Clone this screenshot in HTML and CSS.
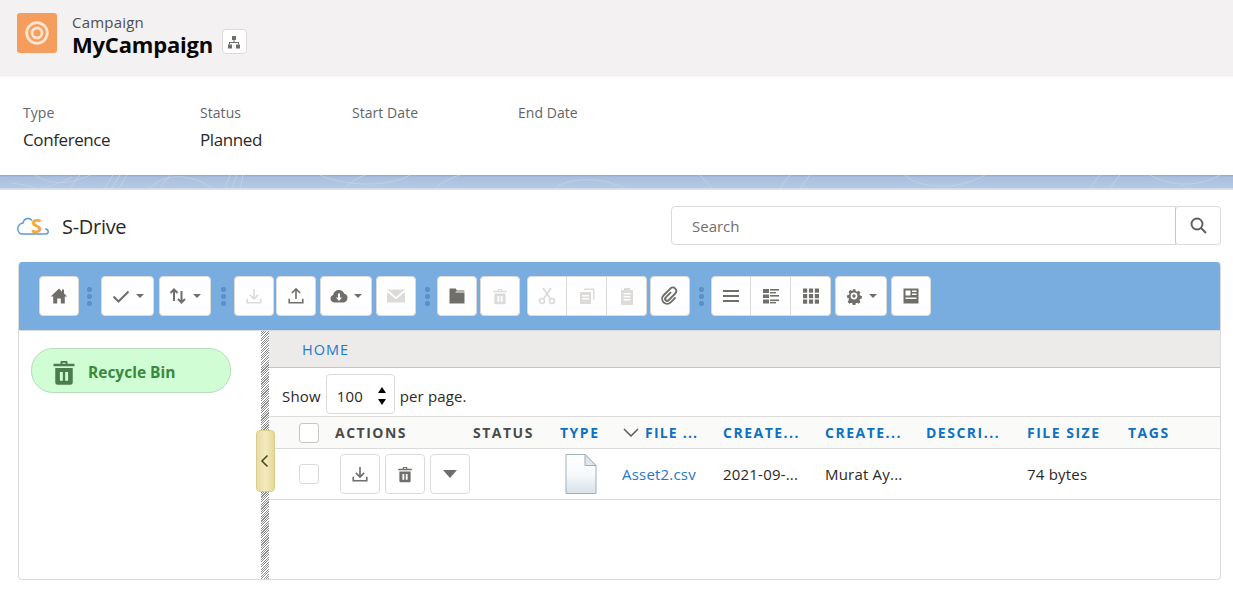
FILE: index.html
```html
<!DOCTYPE html>
<html lang="en">
<head>
<meta charset="utf-8">
<title>MyCampaign</title>
<link rel="stylesheet" href="styles.css">
</head>
<body>
<svg class="defs" width="0" height="0" aria-hidden="true">
  <symbol id="i-trash" viewBox="0 0 24 24"><path d="M9 3.500a1 1 0 0 1 1-1h4a1 1 0 0 1 1 1V5h6v2H3V5h6zM10.600 5h2.800V4h-2.800zM4.500 8.500h15V21a2 2 0 0 1-2 2h-11a2 2 0 0 1-2-2zM8.500 12v7.500h2.500V12zM13 12v7.500h2.500V12z" fill-rule="evenodd"/></symbol>
  <symbol id="i-dl" viewBox="0 0 24 24"><path d="M12 2.500v13M6.500 10.500l5.500 5.500 5.500-5.500M3 15.500v5.500h18v-5.500" fill="none" stroke="currentColor" stroke-width="2.200"/></symbol>
</svg>

<header class="page-head">
  <div class="camp-icon">
    <svg width="26" height="26" viewBox="0 0 26 26" fill="none" stroke="#fff"><circle cx="13" cy="13" r="10.300" stroke-width="2.800" opacity=".72"/><circle cx="13" cy="13" r="5" stroke-width="2.800" opacity=".72"/></svg>
  </div>
  <div class="camp-titles">
    <div class="camp-type">Campaign</div>
    <div class="camp-name-row">
      <h1 class="camp-name">MyCampaign</h1>
      <button class="hier-btn" aria-label="View hierarchy">
        <svg width="14" height="14" viewBox="0 0 14 14" fill="#706e6b"><rect x="5" y="1" width="4" height="4"/><rect x="1" y="9.500" width="4" height="4"/><rect x="9" y="9.500" width="4" height="4"/><path d="M6.500 5h1v2h4.500v2.500h-1V8H3v1.500H2V7h4.500z"/></svg>
      </button>
    </div>
  </div>
</header>

<section class="details">
  <div class="field f-type"><div class="f-label">Type</div><div class="f-value">Conference</div></div>
  <div class="field f-status"><div class="f-label">Status</div><div class="f-value">Planned</div></div>
  <div class="field f-start"><div class="f-label">Start Date</div></div>
  <div class="field f-end"><div class="f-label">End Date</div></div>
</section>

<div class="band">
  <svg width="1233" height="13" viewBox="0 0 1233 13" fill="none" stroke="#c5d5ea" stroke-width="1" opacity=".75">
    <path d="M12 8C25 10 30 11 38 14M35 0C50 10 70 10 90 0M70 13L80 0M72 2C60 8 50 12 40 13M105 13L113 0M112 13L120 0M119 13L127 0M150 13C165-2 190-2 212 13M225 13L230 0M232 13L237 0M240 13L243 0M170 0L160 13M320 0C345 12 390 12 410 0M345 13C350 8 355 4 365 0M435 13C445 6 450 3 460 0M555 13C570 2 600 2 625 13M700 0L712 13M780 13L790 0M800 13L810 0M905 0C920 15 960 15 985 0M1090 13L1100 0M1110 13L1120 0M1150 0C1170 12 1200 12 1220 0"/>
  </svg>
</div>

<section class="sdrive">
  <div class="sd-bar">
    <div class="sd-brand">
      <span class="sd-logo">
        <svg width="32" height="30" viewBox="0 -6 32 30" fill="none"><path d="M15 3.500C12.500 .5 7.500 .5 6 6 2.500 6.500 .8 9.500 .8 12c0 3 2.200 5 4.700 5H28.500c1.500 0 2.700-1 2.700-2.300 0-1.500-1.200-2.700-3-2.700" stroke="#5b9bd9" stroke-width="1.500"/><text class="logo-s" x="14" y="16">S</text></svg>
      </span>
      <span class="sd-title">S-Drive</span>
    </div>
    <div class="search">
      <div class="search-input">Search</div>
      <button class="search-btn" aria-label="Search">
        <svg width="17" height="17" viewBox="0 0 17 17" fill="none" stroke="#5f5e5c" stroke-width="1.900"><circle cx="7" cy="7" r="5.500"/><path d="M11 11l5 5"/></svg>
      </button>
    </div>
  </div>

  <div class="panel">
    <div class="toolbar">
      <button class="tb"><svg width="18" height="18" viewBox="0 0 18 18" fill="#706e6b"><path d="M9 1.500L.8 9.500h2.400V16.500h4v-5h3.600v5h4V9.500h2.400L14 6.600V2.500h-2v2.200z"/></svg></button>
      <span class="grip g1"></span>
      <button class="tb tb-wide"><svg width="18" height="18" viewBox="0 0 18 18" fill="none" stroke="#706e6b" stroke-width="2"><path d="M1.500 9.500l5 5L16.500 4.500"/></svg><span class="caret"></span></button>
      <button class="tb tb-wide tb-sort ml5"><svg width="18" height="18" viewBox="0 0 18 18" fill="none" stroke="#706e6b" stroke-width="2"><path d="M5 14V2.500M1.500 6L5 2.500 8.500 6M12.500 4v11.500M9 12l3.500 3.500L16 12"/></svg><span class="caret"></span></button>
      <span class="grip g2"></span>
      <button class="tb off"><svg class="ic" width="18" height="18"><use href="#i-dl"/></svg></button>
      <button class="tb ml2"><svg width="18" height="18" viewBox="0 0 24 24" fill="none" stroke="#706e6b" stroke-width="2.200"><path d="M12 16V2.500M6.500 8L12 2.500 17.500 8M3 15.500v5.500h18v-5.500"/></svg></button>
      <button class="tb tb-wide tb-sort ml4"><svg width="18" height="18" viewBox="0 0 18 18"><path fill="#706e6b" d="M4.500 15.500C2 15.500.5 13.700.5 11.600c0-1.800 1.100-3.200 2.800-3.600C3.500 5 6 3 9 3c2.500 0 4.500 1.400 5.300 3.700 2 .3 3.200 2 3.200 4 0 2.700-2 4.800-4.500 4.800z"/><path fill="#fff" d="M8 6.500h2v4h2L9 14l-3-3.500h2z"/></svg><span class="caret"></span></button>
      <button class="tb off ml4"><svg width="20" height="20" viewBox="0 0 20 20" fill="#dddbda"><path d="M1 3.500h18L10 11zM1 6l9 7.300L19 6v10.500H1z"/></svg></button>
      <span class="grip"></span>
      <button class="tb"><svg width="18" height="18" viewBox="0 0 18 18" fill="#706e6b"><path d="M1.500 1.500h6.300l1 2h7.700v1H8.300L7.500 5v.5h9v11h-15z"/></svg></button>
      <button class="tb off ml3"><svg class="ic" width="18" height="18"><use href="#i-trash"/></svg></button>
      <div class="tb-group ml7">
        <button class="tb off"><svg width="18" height="18" viewBox="0 0 18 18" fill="none" stroke="#dddbda" stroke-width="1.700"><circle cx="4" cy="14" r="2.500"/><circle cx="14" cy="14" r="2.500"/><path d="M5.500 12L13 1M12.500 12L5 1"/></svg></button>
        <button class="tb off"><svg width="18" height="18" viewBox="0 0 18 18" fill="#dddbda"><path d="M6 1.500h10.500v11H15V3H6z"/><path d="M2 5h11v12H2zM4 8v1.500h7V8zM4 11v1.500h7V11z" fill-rule="evenodd"/></svg></button>
        <button class="tb off"><svg width="18" height="18" viewBox="0 0 18 18" fill="#dddbda"><path d="M6 1h6v2h3v15H3V3h3zM5.500 6v1.500h7V6zM5.500 9v1.500h7V9zM5.500 12v1.500h7V12z" fill-rule="evenodd"/></svg></button>
      </div>
      <button class="tb ml3"><svg width="20" height="20" viewBox="0 0 20 20" fill="none" stroke="#706e6b" stroke-width="1.900"><path transform="rotate(45 10 10)" d="M8 6.500v7.500a2 2 0 0 0 4 0V4.500a3.500 3.500 0 0 0-7 0V14a5 5 0 0 0 10 0V7"/></svg></button>
      <span class="grip"></span>
      <div class="tb-group">
        <button class="tb"><svg width="18" height="18" viewBox="0 0 18 18" fill="#706e6b"><rect x="1" y="3" width="16" height="2"/><rect x="1" y="8" width="16" height="2"/><rect x="1" y="13" width="16" height="2"/></svg></button>
        <button class="tb"><svg width="18" height="18" viewBox="0 0 18 18" fill="#706e6b"><rect x="1" y="2" width="6" height="4"/><rect x="1" y="7.500" width="6" height="3.500"/><rect x="1" y="12.500" width="6" height="4"/><rect x="8" y="2" width="9" height="1.600"/><rect x="8" y="5" width="6" height="1.400"/><rect x="8" y="8" width="9" height="1.600"/><rect x="8" y="12.500" width="9" height="1.600"/><rect x="8" y="15" width="6" height="1.400"/></svg></button>
        <button class="tb"><svg width="18" height="18" viewBox="0 0 18 18" fill="#706e6b"><rect x="1" y="1.500" width="4.200" height="4.200"/><rect x="6.900" y="1.500" width="4.200" height="4.200"/><rect x="12.800" y="1.500" width="4.200" height="4.200"/><rect x="1" y="7" width="4.200" height="4.200"/><rect x="6.900" y="7" width="4.200" height="4.200"/><rect x="12.800" y="7" width="4.200" height="4.200"/><rect x="1" y="12.500" width="4.200" height="4.200"/><rect x="6.900" y="12.500" width="4.200" height="4.200"/><rect x="12.800" y="12.500" width="4.200" height="4.200"/></svg></button>
      </div>
      <button class="tb tb-wide tb-sort ml4"><svg width="18" height="18" viewBox="0 0 18 18"><path fill="#706e6b" d="M7.500 1h3l.5 2.200 1.500.7 2-1.100 2 2.100-1.100 2 .6 1.500 2.200.6v3l-2.200.5-.6 1.500 1.100 2-2 2.100-2-1.100-1.500.6-.5 2.200h-3l-.5-2.200-1.500-.6-2 1.100-2-2.100 1.100-2L3 11.500.8 11V8l2.200-.6.600-1.500-1.100-2 2-2.100 2 1.100 1.500-.7z" transform="translate(1.400 1.400) scale(.85)"/><circle cx="9" cy="9" r="3.400" fill="#fff"/><circle cx="9" cy="9" r="1.700" fill="#706e6b"/></svg><span class="caret"></span></button>
      <button class="tb ml4"><svg width="18" height="18" viewBox="0 0 18 18"><path fill="#706e6b" fill-rule="evenodd" d="M1.500 1.500h15v15h-15zM3.500 3.500v5h5v-5zM10 3.500v1.500h4.500V3.500zM10 6.500V8h4.500V6.500zM3.500 10.500V12h11v-1.500z"/></svg></button>
    </div>

    <div class="browser">
      <aside class="side">
        <a class="recycle">
          <svg class="recycle-ic" width="28" height="28"><use href="#i-trash"/></svg>
          <span>Recycle Bin</span>
        </a>
      </aside>
      <div class="splitter"></div>
      <button class="handle" aria-label="Collapse">
        <svg width="9" height="14" viewBox="0 0 9 14" fill="none" stroke="#4d4315" stroke-width="1.500"><path d="M7.500 1.500L2 7l5.500 5.500"/></svg>
      </button>
      <div class="files">
        <div class="crumb">HOME</div>
        <div class="pager">
          <span class="pager-text">Show</span>
          <div class="page-select"><span>100</span><span class="spin"><i class="up"></i><i class="down"></i></span></div>
          <span class="pager-text">per page.</span>
        </div>
        <div class="row head">
          <div class="c-check"><span class="box"></span></div>
          <div>ACTIONS</div>
          <div>STATUS</div>
          <div class="sortable">TYPE</div>
          <div class="sortable c-name"><svg width="16" height="9" viewBox="0 0 16 9" fill="none" stroke="#5c5c5c" stroke-width="1.500"><path d="M1 1l7 7 7-7"/></svg>FILE ...</div>
          <div class="sortable">CREATE...</div>
          <div class="sortable">CREATE...</div>
          <div class="sortable">DESCRI...</div>
          <div class="sortable">FILE SIZE</div>
          <div class="sortable">TAGS</div>
        </div>
        <div class="row item">
          <div class="c-check"><span class="box light"></span></div>
          <div class="c-actions">
            <button class="act"><svg width="18" height="18"><use href="#i-dl"/></svg></button>
            <button class="act"><svg width="18" height="18"><use href="#i-trash"/></svg></button>
            <button class="act"><span class="caret big"></span></button>
          </div>
          <div></div>
          <div class="c-file">
            <svg width="32" height="40" viewBox="0 0 32 40"><defs><linearGradient id="pg" x1="0" y1="0" x2="0" y2="1"><stop offset="0" stop-color="#fff"/><stop offset=".55" stop-color="#f6f8fa"/><stop offset="1" stop-color="#d5e0e8"/></linearGradient></defs><path d="M1 .5h19L31 11.500v28H1z" fill="url(#pg)" stroke="#9db0bf"/><path d="M20 .5v11h11z" fill="#dfe6ec" stroke="#9db0bf"/></svg>
          </div>
          <div><a class="file-link">Asset2.csv</a></div>
          <div>2021-09-...</div>
          <div>Murat Ay...</div>
          <div></div>
          <div>74 bytes</div>
          <div></div>
        </div>
      </div>
    </div>
  </div>
</section>
</body>
</html>
```
FILE: styles.css
```css
* { box-sizing: border-box; }
html, body { margin: 0; padding: 0; }
body {
  width: 1233px;
  height: 609px;
  overflow: hidden;
  background: #fff;
  font-family: "Open Sans", "Noto Sans", sans-serif;
  color: #1b1b1b;
}
button { font: inherit; padding: 0; cursor: pointer; }
.defs { display: block; height: 0; }

.page-head {
  height: 77px;
  background: #f3f1f2;
  display: flex;
  padding: 13px 0 0 17px;
  gap: 15px;
}
.camp-icon {
  width: 40px;
  height: 40px;
  border-radius: 3px;
  background: #f59d5c;
  display: flex;
  align-items: center;
  justify-content: center;
}
.camp-titles { padding-top: 2px; }
.camp-type { font-size: 15px; line-height: 15px; color: #514f4d; letter-spacing: .2px; }
.camp-name-row { display: flex; align-items: flex-start; gap: 9px; }
.camp-name { margin: 0; font-size: 22px; line-height: 28px; font-weight: 700; color: #080707; letter-spacing: -.2px; }
.hier-btn {
  width: 25px;
  height: 25px;
  margin-top: -1px;
  background: #fff;
  border: 1px solid #dddbda;
  border-radius: 4px;
  display: flex;
  align-items: center;
  justify-content: center;
}

.details { height: 98px; display: flex; padding: 26px 0 0 23px; }
.f-type { width: 177px; }
.f-status { width: 152px; }
.f-start { width: 166px; }
.f-label { font-size: 14px; line-height: 19px; color: #62666a; letter-spacing: .05px; }
.f-value { font-size: 17px; line-height: 24px; margin-top: 6px; color: #2b2826; letter-spacing: -.4px; }

.band {
  height: 15px;
  background: linear-gradient(#8fa6c6, #a9bfdd 2px, #b3c7e3 10px, #b7c9e4 13px, #ccd7e8 13px, #dfe5ef);
}
.band svg { display: block; }

.sdrive { padding: 0 12px 0 18px; }
.sd-bar { height: 72px; display: flex; align-items: center; justify-content: space-between; padding-bottom: 2px; margin-left: -1px; }
.sd-brand { display: flex; align-items: center; gap: 13px; padding-top: 2px; }
.sd-logo { display: flex; width: 32px; height: 30px; }
.logo-s { font-size: 20px; font-weight: 700; fill: #f5a742; stroke: none; font-family: "Open Sans", sans-serif; }
.sd-title { font-size: 20px; color: #2b2826; letter-spacing: -.3px; }
.search { display: flex; width: 550px; height: 39px; }
.search-input {
  flex: 1;
  border: 1px solid #dddbda;
  border-radius: 4px 0 0 4px;
  padding-left: 20px;
  font-size: 15px;
  line-height: 39px;
  color: #706e6b;
}
.search-btn {
  width: 46px;
  border: 1px solid #dddbda;
  border-left-color: #c9c7c5;
  border-radius: 4px;
  margin-left: -1px;
  background: #fff;
  display: flex;
  align-items: center;
  justify-content: center;
}

.panel { height: 318px; border: 1px solid #dddbda; border-top: 0; border-radius: 4px; overflow: hidden; display: flex; flex-direction: column; }
.toolbar { height: 68px; background: #7aaddf; display: flex; align-items: center; padding-left: 20px; flex: none; }
.tb {
  width: 40px;
  height: 40px;
  flex: none;
  background: #fff;
  border: 1px solid #dddbda;
  border-radius: 4px;
  display: flex;
  align-items: center;
  justify-content: center;
}
.tb-wide { width: 53px; gap: 6px; }
.tb-sort { width: 52px; }
.ml2 { margin-left: 2px; }
.ml3 { margin-left: 3px; }
.ml4 { margin-left: 4px; }
.ml5 { margin-left: 5px; }
.ml7 { margin-left: 7px; }
.off .ic { fill: #dddbda; color: #dddbda; }
.caret { width: 0; height: 0; border-left: 4px solid transparent; border-right: 4px solid transparent; border-top: 4px solid #706e6b; }
.caret.big { border-left-width: 7px; border-right-width: 7px; border-top-width: 8px; }
.grip {
  width: 5px;
  height: 21px;
  flex: none;
  margin: 0 7px 0 9px;
  background: radial-gradient(circle at 50% 50%, #5c90c7 2.400px, transparent 2.900px) 0 0 / 5px 7px repeat-y;
}
.grip.g1 { margin: 0 9px 0 8px; }
.grip.g2 { margin: 0 8px 0 10px; }
.tb-group { display: flex; flex: none; }
.tb-group .tb { border-radius: 0; border-left-width: 0; }
.tb-group .tb:first-child { border-left-width: 1px; border-radius: 4px 0 0 4px; }
.tb-group .tb:last-child { border-radius: 0 4px 4px 0; }

.browser { flex: 1; position: relative; display: flex; min-height: 0; border-top: 1px solid #d6dbe0; }
.side { width: 242px; padding: 17px 0 0 12px; flex: none; }
.recycle {
  width: 200px;
  height: 45px;
  padding: 2px 0 0 18px;
  background: #d0fdd4;
  border: 1px solid #b7dcbb;
  border-radius: 22px;
  display: flex;
  align-items: center;
  gap: 10px;
  font-size: 15.500px;
  font-weight: 700;
  color: #39893f;
}
.recycle-ic { fill: #4a7d4e; }
.splitter {
  width: 8px;
  flex: none;
  background: repeating-linear-gradient(135deg, #8e8e8e 0 .8px, #fff .8px 1.700px);
}
.handle {
  position: absolute;
  left: 237px;
  top: 99px;
  width: 19px;
  height: 62px;
  padding-right: 2px;
  background: linear-gradient(90deg, #e9dda0, #f3eac0 50%, #e6d993);
  border: 1px solid #d9cd8e;
  border-radius: 4px;
  display: flex;
  align-items: center;
  justify-content: center;
}

.files { flex: 1; min-width: 0; font-size: 15px; color: #2b2826; }
.crumb {
  height: 37px;
  background: #ecebea;
  border-bottom: 1px solid #c9c7c5;
  padding-left: 33px;
  line-height: 38px;
  font-size: 14.500px;
  letter-spacing: 1px;
  color: #1f78c9;
}
.pager { height: 48px; display: flex; align-items: center; gap: 5px; padding-left: 13px; padding-top: 4px; letter-spacing: .15px; }
.pager-text { padding-top: 4px; }
.page-select {
  width: 69px;
  height: 40px;
  border: 1px solid #dddbda;
  border-radius: 4px;
  display: flex;
  align-items: center;
  justify-content: space-between;
  padding: 3px 8px 0 10px;
}
.spin { display: flex; flex-direction: column; gap: 6px; }
.spin i { display: block; width: 0; height: 0; border-left: 4px solid transparent; border-right: 4px solid transparent; }
.spin .up { border-bottom: 6px solid #000; }
.spin .down { border-top: 6px solid #000; }

.row {
  display: grid;
  grid-template-columns: 66px 138px 87px 63px 100px 102px 101px 101px 101px 1fr;
  align-items: center;
  border-top: 1px solid #dddbda;
}
.head { height: 32px; background: #fafaf9; font-size: 14px; font-weight: 700; letter-spacing: 1.500px; color: #4a4a4a; white-space: nowrap; }
.sortable { color: #0c72c3; }
.c-name { display: flex; align-items: center; gap: 6px; letter-spacing: 1.200px; }
.item { height: 52px; border-bottom: 1px solid #dddbda; letter-spacing: .2px; white-space: nowrap; }
.c-check { padding-left: 30px; display: flex; }
.box { width: 20px; height: 20px; border: 1px solid #c9c7c5; border-radius: 3px; background: #fff; }
.box.light { border-color: #dddbda; }
.c-actions { display: flex; gap: 5px; margin-left: 5px; }
.act {
  width: 40px;
  height: 40px;
  background: #fff;
  border: 1px solid #dddbda;
  border-radius: 4px;
  display: flex;
  align-items: center;
  justify-content: center;
  color: #706e6b;
  fill: #706e6b;
}
.c-file { display: flex; padding-left: 5px; }
.file-link { color: #1f78c9; margin-left: -1px; }
```
